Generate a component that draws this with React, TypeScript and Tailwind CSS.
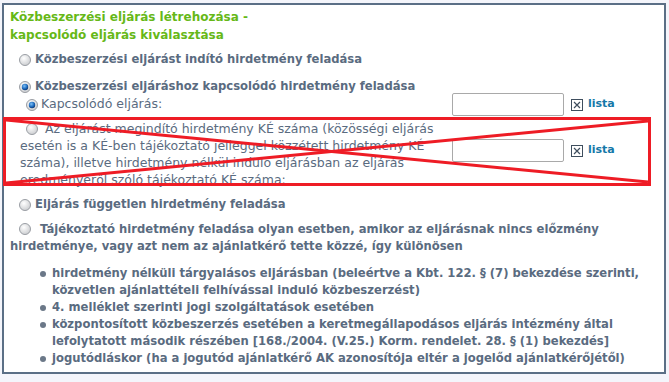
import React from 'react';

function Radio({ checked = false }: { checked?: boolean }) {
  return (
    <svg width="12" height="12" viewBox="0 0 12 12" className="shrink-0">
      <defs>
        <radialGradient id="rg" cx="40%" cy="35%" r="70%">
          <stop offset="0%" stopColor="#ffffff" />
          <stop offset="100%" stopColor="#c9cbce" />
        </radialGradient>
        <radialGradient id="rb" cx="40%" cy="35%" r="70%">
          <stop offset="0%" stopColor="#7ec0f5" />
          <stop offset="60%" stopColor="#1d6bbf" />
          <stop offset="100%" stopColor="#0b2f66" />
        </radialGradient>
      </defs>
      <circle cx="6" cy="6" r="5.5" fill="url(#rg)" stroke="#9a9ea4" strokeWidth="1" />
      {checked && <circle cx="6" cy="6" r="3.2" fill="url(#rb)" />}
    </svg>
  );
}

function ClearIcon() {
  return (
    <svg width="12" height="12" viewBox="0 0 12 12" className="shrink-0">
      <rect x="0.5" y="0.5" width="11" height="11" fill="#fff" stroke="#3f4e5e" />
      <path d="M3 3 L9 9 M9 3 L3 9" stroke="#3f4e5e" strokeWidth="1.2" />
    </svg>
  );
}

function Lookup() {
  return (
    <div className="flex items-center">
      <input className="w-[112px] h-[23px] border border-[#a9a9a9] rounded-[2px] bg-white" />
      <span className="ml-[7px]">
        <ClearIcon />
      </span>
      <a className="ml-[5px] font-bold text-[#1578a8] text-[11px]">lista</a>
    </div>
  );
}

export default function App() {
  return (
    <div className="relative w-[669px] h-[382px] bg-[#f4f5fb] font-['DejaVu_Sans',sans-serif] text-[#5a6b80] text-[11.6px]">
      <div className="absolute left-[2px] top-[3px] w-[664px] h-[371px] border-2 border-[#5b6f86] bg-white pl-[6px]">
        <div className="mt-[3px] font-bold text-[#66b817] text-[12px] leading-[18px]">
          Közbeszerzési eljárás létrehozása -<br />
          kapcsolódó eljárás kiválasztása
        </div>

        <div className="mt-[7px] h-[18px] flex items-center font-bold ml-[9px] gap-[4px]">
          <Radio />
          <span>Közbeszerzési eljárást indító hirdetmény feladása</span>
        </div>

        <div className="mt-[9px] h-[18px] flex items-center font-bold ml-[9px] gap-[4px]">
          <Radio checked />
          <span>Közbeszerzési eljáráshoz kapcsolódó hirdetmény feladása</span>
        </div>

        <div className="-mt-[3px] flex items-center text-[12.5px]">
          <div className="w-[442px] flex items-center gap-[3px] pl-[16px]">
            <Radio checked />
            <span>Kapcsolódó eljárás:</span>
          </div>
          <Lookup />
        </div>

        <div className="mt-[4px] flex items-start">
          <div className="w-[442px] pl-[10px] leading-[17px] whitespace-nowrap text-[12.5px]">
            <span className="inline-flex items-center align-middle ml-[6px] mr-[7px] -mt-[2px]">
              <Radio />
            </span>
            Az eljárást megindító hirdetmény KÉ száma (közösségi eljárás<br />
            esetén is a KÉ-ben tájékoztató jelleggel közzétett hirdetmény KÉ<br />
            száma), illetve hirdetmény nélkül induló eljárásban az eljárás<br />
            eredményéről szóló tájékoztató KÉ száma:
          </div>
          <div className="mt-[19px]">
            <Lookup />
          </div>
        </div>

        <div className="mt-[8px] h-[18px] flex items-center font-bold ml-[9px] gap-[4px]">
          <Radio />
          <span>Eljárás független hirdetmény feladása</span>
        </div>

        <div className="mt-[7px] font-bold leading-[17px] whitespace-nowrap">
          <span className="inline-flex items-center align-middle ml-[9px] mr-[9px] -mt-[2px]">
            <Radio />
          </span>
          Tájékoztató hirdetmény feladása olyan esetben, amikor az eljárásnak nincs előzmény<br />
          hirdetménye, vagy azt nem az ajánlatkérő tette közzé, így különösen
        </div>

        <ul className="mt-[10px] ml-[30px] font-bold leading-[17px] whitespace-nowrap">
          {[
            ['hirdetmény nélküli tárgyalásos eljárásban (beleértve a Kbt. 122. § (7) bekezdése szerinti,', 'közvetlen ajánlattételi felhívással induló közbeszerzést)'],
            ['4. melléklet szerinti jogi szolgáltatások esetében'],
            ['központosított közbeszerzés esetében a keretmegállapodásos eljárás intézmény által', 'lefolytatott második részében [168./2004. (V.25.) Korm. rendelet. 28. § (1) bekezdés]'],
            ['jogutódláskor (ha a jogutód ajánlatkérő AK azonosítója eltér a jogelőd ajánlatkérőjétől)'],
          ].map((lines, i) => (
            <li key={i} className="flex items-start">
              <span className="mt-[6px] w-[6px] h-[6px] rounded-full bg-[#6b7888] shrink-0" />
              <span className="ml-[6px]">
                {lines.map((l, j) => (
                  <React.Fragment key={j}>
                    {j > 0 && <br />}
                    {l}
                  </React.Fragment>
                ))}
              </span>
            </li>
          ))}
        </ul>
      </div>

      {/* red annotation over the second option */}
      <div className="absolute left-[3px] top-[117px] w-[648px] h-[69px] border-[3px] border-[#ee1c25]">
        <svg className="absolute inset-0 w-full h-full" viewBox="0 0 642 63" preserveAspectRatio="none">
          <line x1="0" y1="0" x2="642" y2="62" stroke="#ee1c25" strokeWidth="3" />
          <line x1="0" y1="63" x2="642" y2="1" stroke="#ee1c25" strokeWidth="3" />
        </svg>
      </div>
    </div>
  );
}
